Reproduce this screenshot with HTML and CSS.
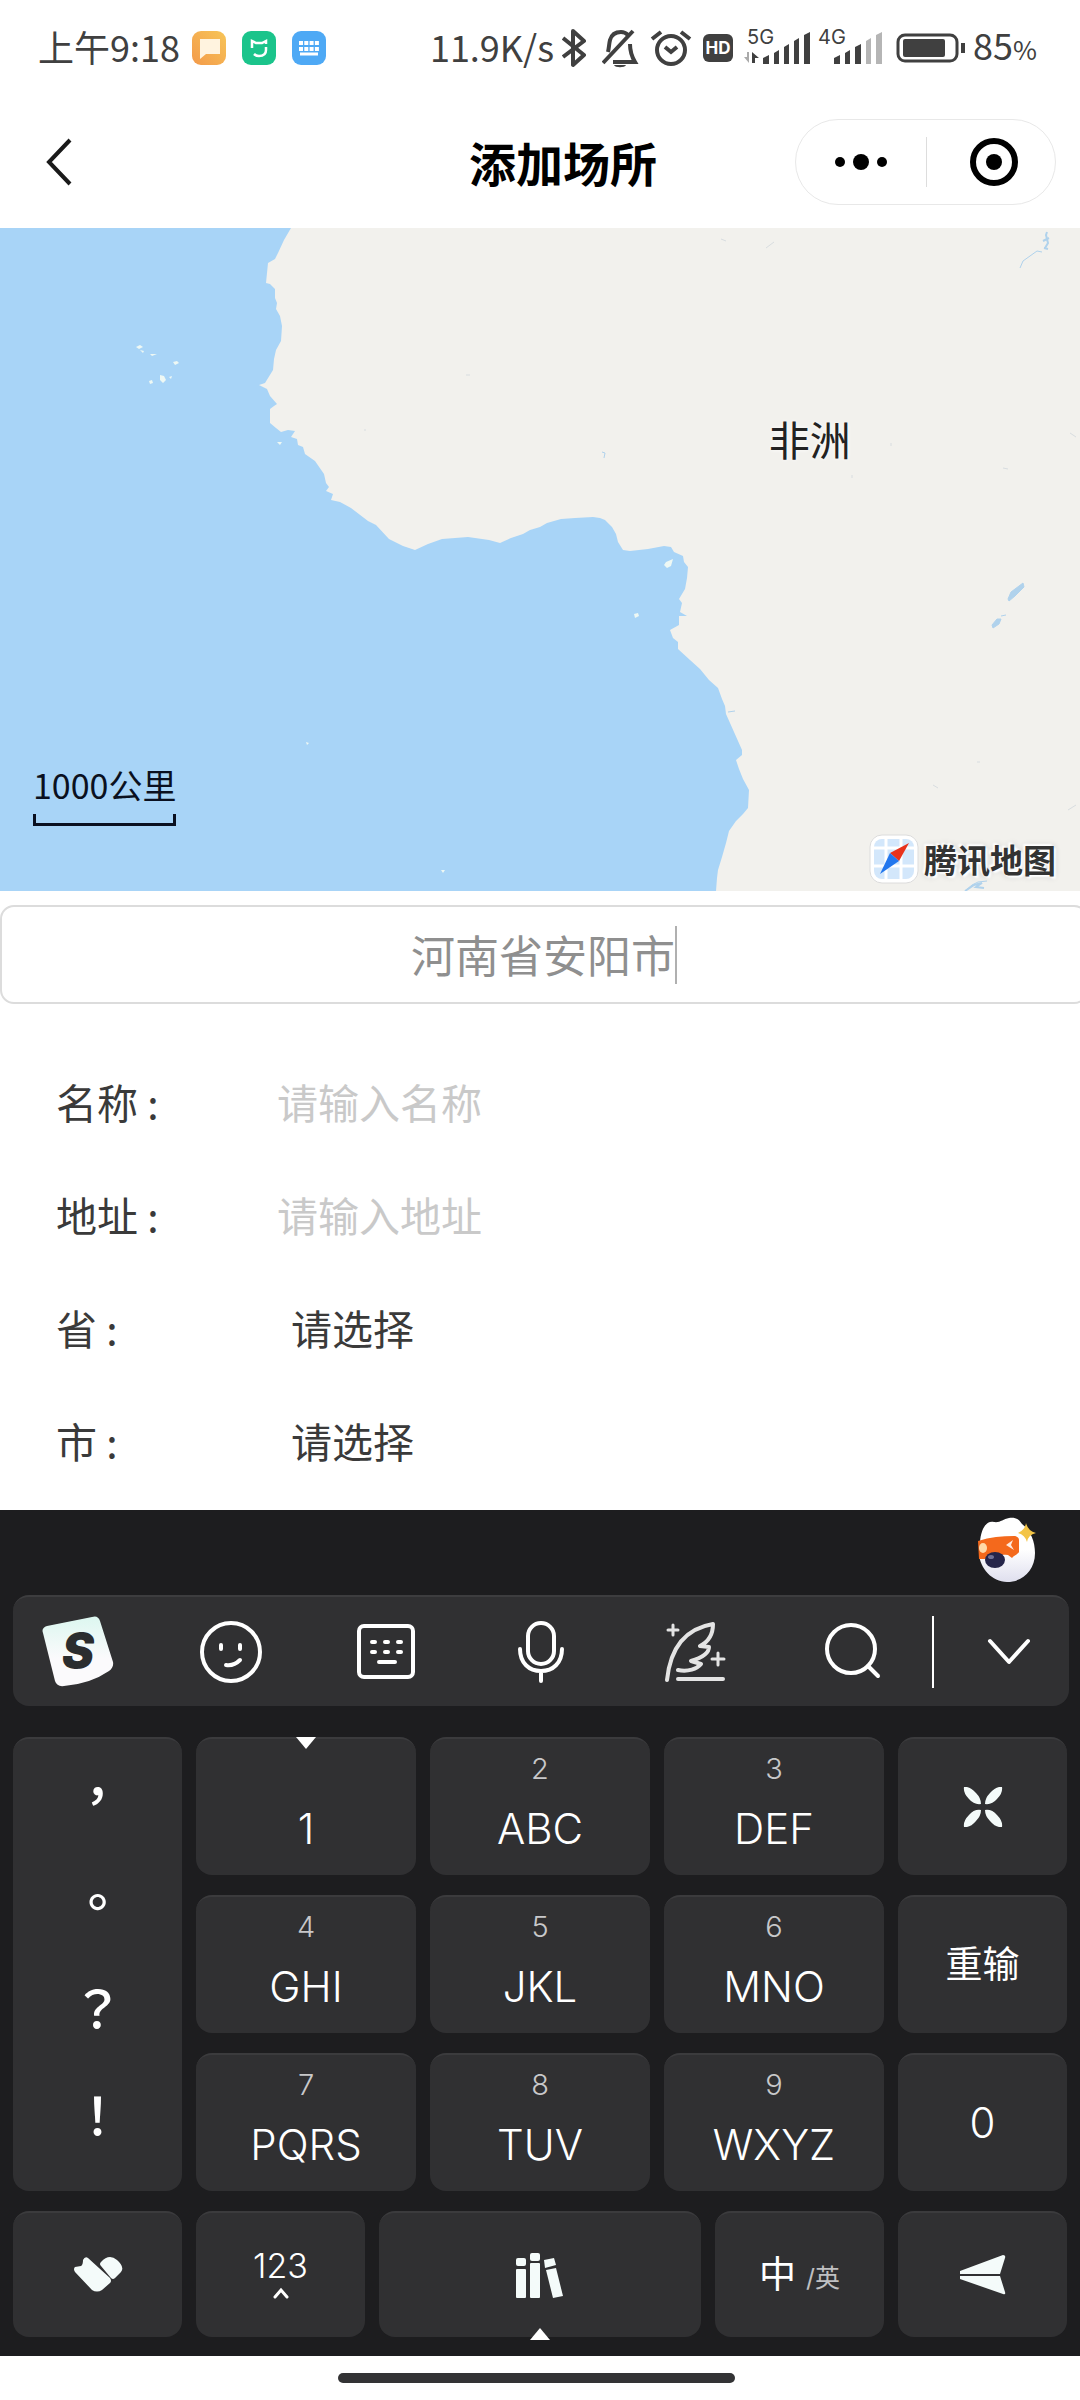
FILE: index.html
```html
<!DOCTYPE html>
<html lang="zh-CN">
<head>
    <meta charset="UTF-8">
    <meta name="viewport" content="width=device-width, initial-scale=1.0">
    <title>添加场所</title>
    <link rel="stylesheet" href="styles.css">
</head>
<body>
    <div class="status-bar">
        <div class="status-left">
            <span>上午9:18</span>
            <svg width="34" height="34" viewBox="0 0 34 34">
                <defs>
                    <linearGradient id="msg" x1="1" y1="0" x2="0" y2="1">
                        <stop offset="0" stop-color="#f7c558"/>
                        <stop offset="1" stop-color="#f39a4a"/>
                    </linearGradient>
                </defs>
                <rect width="34" height="34" rx="9" fill="url(#msg)"/>
                <path d="M8 8h20v15H14l-6 5z" fill="#fff3df"/>
            </svg>
            <svg width="34" height="34" viewBox="0 0 34 34">
                <rect width="34" height="34" rx="9" fill="#1bc48b"/>
                <path d="M10 17V10l4 2h6l4-2v3M24 16v3c0 4-3 6-7 6-2 0-4-1-5-2" fill="none" stroke="#fff" stroke-width="2.5"/>
            </svg>
            <svg width="34" height="34" viewBox="0 0 34 34">
                <rect width="34" height="34" rx="9" fill="#4ea9f5"/>
                <path d="M7 12h20M7 18h20" stroke="#fff" stroke-width="4" stroke-dasharray="4 1.3"/>
                <path d="M8 23h18" stroke="#fff" stroke-width="3"/>
            </svg>
        </div>
        <div class="status-right">
            <span>11.9K/s</span>
            <!-- bluetooth -->
            <svg width="32" height="40" viewBox="0 0 32 40">
                <path d="M1 10l21 17-11 10V3l11 10L1 29" fill="none" stroke="#404040" stroke-width="4" stroke-linejoin="round"/>
            </svg>
            <!-- muted bell -->
            <svg width="40" height="40" viewBox="0 0 40 40" fill="none" stroke="#404040" stroke-width="4">
                <path d="M6 24c1-4 1-8 2-12C10 5 16 4 19 4c3 0 5 1 7 3M28 16c0 8 2 13 5 18H11"/>
                <path d="M31 3L1 35"/>
                <path d="M12 37h12c-1 3-11 3-12 0z" fill="#404040" stroke="none"/>
            </svg>
            <!-- alarm -->
            <svg width="42" height="40" viewBox="0 0 42 40" fill="none" stroke="#404040" stroke-width="4">
                <circle cx="21" cy="22" r="14"/>
                <path d="M15 19l6 5 6-5"/>
                <path d="M2 11l9-7M31 4l9 7"/>
            </svg>
            <svg width="36" height="40" viewBox="0 0 36 40">
                <rect x="3" y="6" width="30" height="28" rx="6" fill="#404040"/>
                <text x="18" y="26" class="hd-text">HD</text>
            </svg>
            <svg width="66" height="52" viewBox="0 -6 66 52" fill="#404040">
                <text x="3" y="16" class="net-text">5G</text>
                <path d="M5 24v11l-5-6h3v-5z" fill="#aaa"/>
                <path d="M8 24l7 6h-4v5H8z"/>
                <path d="M19 30l6-3v9h-6zM30 25l5-3v14h-5zM40 19l5-3v20h-5zM50 13l5-3v26h-5zM60 7l6-3v32h-6z"/>
            </svg>
            <svg width="70" height="52" viewBox="0 -6 70 52" fill="#404040">
                <text x="0" y="16" class="net-text">4G</text>
                <path d="M16 30l6-3v9h-6zM27 25l5-3v14h-5zM37 19l6-3v20h-6z"/>
                <path d="M48 13l5-3v26h-5zM58 7l6-3v32h-6z" fill="#b5b5b5"/>
            </svg>
            <svg width="69" height="40" viewBox="0 0 69 40">
                <rect x="2" y="7" width="59" height="26" rx="7" fill="none" stroke="#404040" stroke-width="3"/>
                <rect x="7" y="11" width="42" height="18" rx="2" fill="#404040"/>
                <path d="M67 15v10" stroke="#404040" stroke-width="4"/>
            </svg>
            <span>85<small>%</small></span>
        </div>
    </div>

    <header class="nav-bar">
        <button class="back" aria-label="返回">
            <svg width="26" height="48" viewBox="0 0 26 48">
                <path d="M24 2L3 24l21 22" fill="none" stroke="#1a1a1a" stroke-width="4"/>
            </svg>
        </button>
        <h1>添加场所</h1>
        <div class="capsule">
            <button aria-label="更多">
                <svg width="52" height="18" viewBox="0 0 52 18">
                    <circle cx="5" cy="9" r="5"/>
                    <circle cx="26" cy="9" r="8"/>
                    <circle cx="47" cy="9" r="5"/>
                </svg>
            </button>
            <button aria-label="关闭">
                <svg width="48" height="48" viewBox="0 0 48 48">
                    <circle cx="24" cy="24" r="21" fill="none" stroke="#000" stroke-width="6"/>
                    <circle cx="24" cy="24" r="8"/>
                </svg>
            </button>
        </div>
    </header>

    <main>
        <div class="map">
            <svg class="map-canvas" viewBox="0 0 1080 663">
                <rect width="1080" height="663" fill="#a8d4f7"/>
                <path fill="#f2f1ed" d="M291 0L284 12 278 25 275 31 268 35 267 45 266 55 270 56 275 61 275 70 277 75 276 81 280 88 282 98 281 113 276 122 274 131 273 142 265 155 259 157 267 161 270 168 277 176 274 178 270 181 270 195 276 200 281 204 288 202 295 203 291 209 297 211 298 217 303 219 305 226 315 233 324 246 326 255 329 259 326 263 333 266 331 272 340 274 351 280 368 293 376 297 389 311 403 318 415 322 428 316 442 311 468 309 489 312 500 315 511 310 523 306 530 302 540 299 547 295 561 291 575 290 593 289 600 290 605 292 612 299 616 306 618 314 623 322 630 323 648 321 664 318 671 319 674 324 683 328 684 334 688 339 687 350 685 361 679 371 682 375 680 384 687 388 679 388 679 397 670 402 673 410 678 414 678 421 690 432 700 441 709 452 718 460 722 471 725 478 726 486 734 504 742 522 742 527 736 532 739 541 743 551 749 562 748 580 743 586 736 593 729 603 726 615 722 629 718 642 717 650 716 663H1080V0Z"/>
                <!-- islands -->
                <g fill="#eef8f4">
                    <path d="M136 119l4-2 3 2-4 2zM140 122l4 1-1 2zM150 126l7 0-5 2zM173 134l4-1 2 2-4 2zM160 147l4 1 2 4-3 3-3-3zM149 153l3-1 1 3-3 1zM169 149l3-1-1 3zM277 214l5 0-2 3zM306 514l3 1-2 2zM441 642l4 0-2 3z"/>
                    <path d="M666 334l7-3-2 7-4 2-3-3zM634 386l4-1 1 3-4 2z"/>
                </g>
                <!-- lakes and rivers -->
                <g fill="#b0d2ec" stroke="#b0d2ec">
                    <path d="M1008 371l3-7 12-9 1 4-9 9-6 5zM992 397l5-6 4 0-2 5-6 4zM1001 388l5-1"/>
                    <path d="M1045 20l3-5-2-8 1-3M1043 13l6-3M1044 20l4 1" fill="none" stroke-width="2"/>
                    <path d="M1020 40l3-7 7-5 7-5 5 1M965 663l7-6 6-3 9-1M602 224l3 1-1 5M728 484l7-1" fill="none"/>
                    <path d="M965 663l9-6 8-2-6 4 8 1" fill="none" stroke-width="2"/>
                </g>
                <path fill="none" stroke="#d8dde0" d="M466 147h4M364 202h2M721 11l5 2M766 20l8-6M1070 205l6 4M1003 240l5 1M891 215v3M933 557l5 3M1068 582l8-5M977 534h3M852 247v3"/>
            </svg>
            <span class="map-label">非洲</span>
            <div class="map-scale">1000公里</div>
            <div class="map-logo">
                <svg width="50" height="50" viewBox="0 0 50 50">
                    <rect x="1" y="1" width="48" height="48" rx="12" fill="#fff" stroke="#dcdcdc"/>
                    <rect x="5" y="5" width="40" height="40" rx="8" fill="#d3e7fb"/>
                    <path d="M5 14h40M17 5v40M32 5v40M5 32h40" stroke="#fff" stroke-width="3"/>
                    <path d="M40 9L30 27l-9-8z" fill="#e8321c"/>
                    <path d="M11 40l10-21 9 8z" fill="#2277ee"/>
                </svg>
                <span>腾讯地图</span>
            </div>
        </div>

        <div class="search-box">
            <input type="text" id="region" aria-label="地区" value="河南省安阳市">
            <span class="cursor"></span>
        </div>

        <form class="place-form">
            <div class="row">
                <label for="name">名称 :</label>
                <input type="text" id="name" placeholder="请输入名称">
            </div>
            <div class="row">
                <label for="address">地址 :</label>
                <input type="text" id="address" placeholder="请输入地址">
            </div>
            <div class="row">
                <label for="province">省 :</label>
                <select id="province"><option>请选择</option></select>
            </div>
            <div class="row">
                <label for="city">市 :</label>
                <select id="city"><option>请选择</option></select>
            </div>
        </form>
    </main>

    <section class="keyboard">
        <div class="assistant">
            <button aria-label="助手">
                <svg width="62" height="68" viewBox="0 0 62 68">
                    <defs>
                        <linearGradient id="body" x1="0" y1="0" x2="0" y2="1">
                            <stop offset="0.5" stop-color="#fff"/>
                            <stop offset="1" stop-color="#dfdfee"/>
                        </linearGradient>
                    </defs>
                    <path d="M3 26C4 12 10 4 17 6c6 1 9-3 15-4 6-1 10 1 13 6 9 7 13 18 13 29 0 18-13 29-28 29S3 52 2 38z" fill="url(#body)"/>
                    <path d="M1 25c12-4 24-5 36-5 3 0 5 2 5 4v12c-2 3-5 3-7 6l-4-3c-9-1-17 1-23 4H2z" fill="#f4691c"/>
                    <ellipse cx="6" cy="32" rx="4" ry="5" fill="#ffd9a8"/>
                    <path d="M36 24l-7 5 8 5-3-5z" fill="#ffe9dc"/>
                    <ellipse cx="18" cy="44" rx="10" ry="8" fill="#25254a"/>
                    <ellipse cx="14" cy="41" rx="3" ry="2" fill="#6f7094"/>
                    <path d="M49 7q2 8 10 10-8 2-9 9-2-7-9-9 7-3 8-10z" fill="#f3c446"/>
                </svg>
            </button>
        </div>

        <div class="toolbar">
            <button class="ime" aria-label="输入法">
                <svg width="72" height="72" viewBox="0 0 72 72">
                    <defs>
                        <linearGradient id="logo" x1="0" y1="0" x2="0" y2="1">
                            <stop offset="0" stop-color="#dcf7f0"/>
                            <stop offset="0.6" stop-color="#fbfafc"/>
                        </linearGradient>
                    </defs>
                    <path d="M5 10L50 1q6-2 8 4l13 41q1 5-4 9-19 13-45 15-7 1-9-5L1 17q-2-5 4-7z" fill="url(#logo)"/>
                    <text x="36" y="52" class="logo-text">S</text>
                </svg>
            </button>
            <button aria-label="表情">
                <svg width="62" height="62" viewBox="0 0 62 62">
                    <circle cx="31" cy="31" r="29"/>
                    <path d="M21 24v4M40 24v4M26 44c6 1 10-1 14-5"/>
                </svg>
            </button>
            <button aria-label="键盘">
                <svg width="62" height="62" viewBox="0 0 62 62">
                    <rect x="4" y="5" width="54" height="51" rx="5"/>
                    <path d="M17 21h3M30 21h3M43 21h3M17 31h3M30 31h3M43 31h3M24 41h16"/>
                </svg>
            </button>
            <button aria-label="语音">
                <svg width="62" height="62" viewBox="0 0 62 62">
                    <rect x="18" y="2" width="26" height="41" rx="13"/>
                    <path d="M10 28c0 14 9 22 21 22s21-8 21-22M31 50v10"/>
                </svg>
            </button>
            <button aria-label="智能写作">
                <svg class="feather" width="62" height="62" viewBox="0 0 62 62">
                    <path d="M2 59C5 30 18 8 48 3c0 9-3 17-13 22l9 1c0 6-8 11-18 14l10 3c-4 5-13 8-23 6M13 58h45"/>
                    <path d="M8 4v10M3 9h10M53 32v12M47 38h12" stroke-width="3"/>
                </svg>
            </button>
            <button aria-label="搜索">
                <svg width="62" height="62" viewBox="0 0 62 62">
                    <circle cx="29" cy="28" r="24"/>
                    <path d="M46 45l10 10"/>
                </svg>
            </button>
            <button class="collapse" aria-label="收起">
                <svg width="62" height="62" viewBox="0 0 62 62">
                    <path d="M12 20l19 21 19-21"/>
                </svg>
            </button>
        </div>

        <div class="keys">
            <div class="punctuation">
                <button>，</button>
                <button>。</button>
                <button>？</button>
                <button>！</button>
            </div>
            <button class="key letters"><span class="mark mark-down"></span><small></small>1</button>
            <button class="key letters"><small>2</small>ABC</button>
            <button class="key letters"><small>3</small>DEF</button>
            <button class="key" aria-label="删除">
                <svg width="40" height="40" viewBox="0 0 40 40" fill="#f4fbfa">
                    <path d="M1 0q6-1 12 6 5 5 5 11-7 1-12-5Q0 6 1 0zM39 0q-6-1-12 6-5 5-5 11 7 1 12-5 6-6 5-12zM1 40q6 1 12-6 5-5 5-11-7-1-12 5-6 6-5 12zM39 40q-6 1-12-6-5-5-5-11 7-1 12 5 6 6 5 12z"/>
                </svg>
            </button>
            <button class="key letters"><small>4</small>GHI</button>
            <button class="key letters"><small>5</small>JKL</button>
            <button class="key letters"><small>6</small>MNO</button>
            <button class="key reset">重输</button>
            <button class="key letters"><small>7</small>PQRS</button>
            <button class="key letters"><small>8</small>TUV</button>
            <button class="key letters"><small>9</small>WXYZ</button>
            <button class="key">0</button>
        </div>

        <div class="keys-bottom">
            <button class="key" aria-label="符号">
                <svg width="50" height="40" viewBox="0 0 50 40" fill="#f4fbfa">
                    <path d="M2 12l6-1q2-1 2-6 2-4 5-2l22 20q2 3 0 5l-8 7q-5 3-10 0L2 17q-2-3 0-5z"/>
                    <path d="M28 7q8-9 16-2 8 7 4 12l-6 6q-2 2-4 0L28 11q-2-2 0-4z"/>
                </svg>
            </button>
            <button class="key numbers">
                123
                <svg width="16" height="12" viewBox="0 0 16 12">
                    <path d="M2 10l6-7 6 7" fill="none" stroke="#fff" stroke-width="3" stroke-linecap="round"/>
                </svg>
            </button>
            <button class="key" aria-label="空格">
                <svg width="50" height="46" viewBox="0 0 50 46" fill="#f4fbfa">
                    <rect x="1" y="6" width="10" height="8" rx="2"/>
                    <rect x="1" y="17" width="10" height="29" rx="1"/>
                    <rect x="15" y="1" width="10" height="8" rx="2"/>
                    <rect x="15" y="11" width="10" height="35" rx="1"/>
                    <path d="M29 8l10-2 2 7-11 3zM31 18l10-2 7 28-10 2z"/>
                </svg>
                <span class="mark mark-up"></span>
            </button>
            <button class="key language">中<small>/英</small></button>
            <button class="key" aria-label="发送">
                <svg width="46" height="40" viewBox="0 0 46 40" fill="#f4fbfa">
                    <path d="M0 16L43 0q3 0 2 3l-5 16H0zM0 21h40l5 16q1 3-2 2L0 24z"/>
                </svg>
            </button>
        </div>
    </section>

    <footer class="home-bar"><span></span></footer>
</body>
</html>
```
FILE: styles.css
```css
* {
    box-sizing: border-box;
}
body {
    margin: 0;
    min-height: 100vh;
    background-color: #fff;
    font-family: "Noto Sans CJK SC", sans-serif;
    color: #3a3a3a;
}
button, input, select {
    font: inherit;
    color: inherit;
    border: 0;
    padding: 0;
    margin: 0;
    background: none;
    outline: none;
}
svg {
    display: block;
    flex-shrink: 0;
}

/* status bar */
.status-bar {
    display: flex;
    justify-content: space-between;
    height: 96px;
    padding: 0 43px 0 38px;
    font-size: 36px;
    line-height: 40px;
    color: #404040;
}
.status-left, .status-right {
    display: flex;
    align-items: center;
}
.status-left {
    gap: 16px;
}
.status-bar span {
    padding-bottom: 4px;
}
.status-left span {
    margin-right: -4px;
}
.status-right {
    gap: 8px;
}
.status-right small {
    font-size: 26px;
}
.hd-text {
    font: bold 17px Inter, sans-serif;
    fill: #fff;
    text-anchor: middle;
}
.net-text {
    font: 20px Inter, sans-serif;
}

/* title bar */
.nav-bar {
    display: grid;
    grid-template-columns: 1fr auto 1fr;
    align-items: center;
    height: 132px;
    padding: 0 24px 0 46px;
}
.nav-bar h1 {
    margin: 0;
    font-size: 47px;
    line-height: 64px;
    font-weight: 700;
    color: #000;
    padding-left: 24px;
}
.back {
    justify-self: start;
}
.capsule {
    display: flex;
    justify-self: end;
    width: 261px;
    height: 86px;
    border: 1px solid #e8e8e8;
    border-radius: 43px;
    padding: 17px 0;
}
.capsule button {
    width: 50%;
    display: flex;
    align-items: center;
    justify-content: center;
}
.capsule button + button {
    border-left: 1px solid #ddd;
    padding-left: 6px;
}

/* map */
main {
    overflow: hidden;
}
.map {
    position: relative;
}
.map-canvas {
    width: 100%;
    height: auto;
}
.map-label {
    position: absolute;
    left: 71%;
    top: 182px;
    padding-left: 2px;
    font-size: 41px;
    line-height: 56px;
    color: #222;
    text-shadow: 0 0 4px #fff;
}
.map-scale {
    position: absolute;
    left: 33px;
    bottom: 65px;
    font-size: 34px;
    line-height: 46px;
    color: #0a1020;
}
.map-scale::after {
    content: "";
    display: block;
    height: 9px;
    margin-top: 6px;
    border: 3px solid #0a1020;
    border-top: 0;
}
.map-logo {
    position: absolute;
    right: 24px;
    bottom: 7px;
    display: flex;
    align-items: center;
    gap: 5px;
    font-size: 33px;
    line-height: 50px;
    font-weight: 700;
    color: #333;
    text-shadow: 0 0 3px #fff, 2px 2px 2px #fff, -2px -2px 2px #fff, 0 0 6px #bbb;
}

/* search box */
.search-box {
    display: flex;
    align-items: center;
    justify-content: center;
    height: 99px;
    margin: 14px -8px 0 0;
    border: 2px solid #dcdcdc;
    border-radius: 14px;
}
.search-box input {
    width: 6em;
    padding-bottom: 2px;
    font-size: 44px;
    color: #8f8f8f;
}
.cursor {
    width: 2px;
    height: 58px;
    background-color: #b0b0b0;
}

/* form */
.place-form {
    padding: 40px 56px 14px;
    font-size: 41px;
}
.row {
    display: flex;
    align-items: center;
    height: 113px;
}
.row label {
    width: 221px;
}
.row input, .row select {
    flex: 1;
}
.row select {
    appearance: none;
    padding-left: 14px;
}
.row input::placeholder {
    color: #c9c9c9;
}

/* keyboard */
.keyboard {
    padding: 0 13px 19px;
    background-color: #1d1d1f;
    color: #fff;
}
.assistant {
    display: flex;
    justify-content: flex-end;
    height: 85px;
    padding: 0 28px 5px;
}
.toolbar {
    display: grid;
    grid-template-columns: 140fr 155fr 155fr 155fr 155fr 159fr 137fr;
    align-items: center;
    height: 111px;
    margin: 0 -2px 31px 0;
    border-top: 2px solid #3d3d3f;
    border-radius: 16px;
    background-color: #303032;
    fill: none;
    stroke: #fff;
    stroke-width: 4;
    stroke-linecap: round;
    stroke-linejoin: round;
}
.toolbar button {
    display: flex;
    align-items: center;
    justify-content: center;
    height: 72px;
}
.toolbar .ime {
    padding-right: 10px;
    stroke: none;
}
.toolbar .collapse {
    border-left: 2px solid #fff;
    padding-left: 14px;
}
.logo-text {
    font: italic 900 48px Inter, sans-serif;
    fill: #2b2d2f;
    text-anchor: middle;
}
.feather {
    stroke: #e4e4e4;
}
.keys, .keys-bottom {
    display: grid;
    gap: 20px 14px;
}
.keys {
    grid-template-columns: 169fr 220fr 220fr 220fr 169fr;
    grid-auto-rows: 138px;
    margin-bottom: 20px;
}
.keys-bottom {
    grid-template-columns: 169fr 169fr 322fr 169fr 169fr;
    grid-auto-rows: 126px;
}
.key, .punctuation {
    position: relative;
    display: flex;
    align-items: center;
    justify-content: center;
    border-top: 2px solid #3b3b3d;
    border-radius: 16px;
    background-color: #303032;
    font-family: Inter, "Noto Sans CJK SC", sans-serif;
    font-weight: 300;
    font-size: 42px;
    line-height: 50px;
}
.punctuation {
    grid-row: span 3;
    flex-direction: column;
    padding-bottom: 24px;
    font-family: "Noto Sans CJK TC", sans-serif;
    font-weight: 500;
    font-size: 52px;
}
.punctuation button {
    flex: 1;
}
.letters {
    flex-direction: column;
    justify-content: flex-start;
    gap: 17px;
    padding-top: 12px;
}
.letters small {
    height: 36px;
    font-size: 29px;
    line-height: 36px;
    color: #c8c8ca;
}
.reset {
    font-size: 37px;
    font-weight: 400;
}
.numbers {
    flex-direction: column;
    padding-bottom: 6px;
    font-size: 34px;
    line-height: 42px;
}
.language {
    gap: 10px;
    font-size: 37px;
    font-weight: 400;
}
.language small {
    padding-top: 6px;
    font-size: 25px;
    color: #c0c0c2;
}
.mark {
    position: absolute;
    left: 50%;
    margin-left: -10px;
    border: 10px solid transparent;
}
.mark-down {
    top: -2px;
    border-top: 12px solid #fff;
    border-bottom: 0;
}
.mark-up {
    bottom: -3px;
    border-bottom: 12px solid #fff;
    border-top: 0;
}

/* gesture bar */
.home-bar {
    display: flex;
    justify-content: center;
    padding: 17px 7px 17px 0;
}
.home-bar span {
    width: 37%;
    height: 10px;
    border-radius: 5px;
    background-color: #333335;
}
```
